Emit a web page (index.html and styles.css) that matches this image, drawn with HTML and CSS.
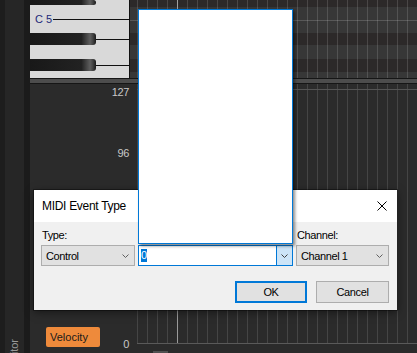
FILE: index.html
```html
<!DOCTYPE html>
<html>
<head>
<meta charset="utf-8">
<link rel="stylesheet" href="styles.css">
</head>
<body>
<div class="app">
  <div class="edge"></div>
  <div class="side"><span class="side-label">Velocity Editor</span></div>
  <div class="gutter"></div>
  <div class="main">
    <div class="roll">
      <div class="piano">
        <div class="key-row top"><div class="black-key"></div></div>
        <div class="key-gap g1"></div>
        <div class="c-row"><span class="c-label">C 5</span><span class="key-line"></span></div>
        <div class="key-gap g2"></div>
        <div class="key-row"><div class="black-key"></div><span class="key-line"></span></div>
        <div class="key-gap g3"></div>
        <div class="key-row"><div class="black-key"></div><span class="key-line"></span></div>
      </div>
      <div class="roll-grid"></div>
    </div>
    <div class="splitter"></div>
    <div class="vel">
      <div class="vel-scale">
        <span class="tick t127">127</span>
        <span class="tick t96">96</span>
        <div class="vel-foot">
          <button class="vel-btn">Velocity</button>
          <span class="tick t0">0</span>
        </div>
      </div>
      <div class="vel-grid">
        <div class="lanes"></div>
        <div class="vel-bottom"><span class="thumb"></span></div>
      </div>
    </div>
  </div>
</div>

<div class="dialog">
  <div class="titlebar">
    <span class="title">MIDI Event Type</span>
    <svg class="close" width="10" height="10" viewBox="0 0 10 10"><path d="M0.5 0.5 L9.5 9.5 M9.5 0.5 L0.5 9.5" stroke="#000" stroke-width="1" fill="none"/></svg>
  </div>
  <div class="dlg-body">
    <div class="fields">
      <div class="field f-type">
        <label>Type:</label>
        <div class="select"><span>Control</span><svg width="7" height="4" viewBox="0 0 7 4"><path d="M0.5 0.5 L3.5 3.5 L6.5 0.5" fill="none" stroke="#606060"/></svg></div>
      </div>
      <div class="field f-value">
        <label></label>
        <div class="combo">
          <span class="combo-text"><span class="sel">0</span></span>
          <span class="combo-btn"><svg width="7" height="4" viewBox="0 0 7 4"><path d="M0.5 0.5 L3.5 3.5 L6.5 0.5" fill="none" stroke="#404040"/></svg></span>
        </div>
      </div>
      <div class="field f-channel">
        <label>Channel:</label>
        <div class="select"><span>Channel 1</span><svg width="7" height="4" viewBox="0 0 7 4"><path d="M0.5 0.5 L3.5 3.5 L6.5 0.5" fill="none" stroke="#606060"/></svg></div>
      </div>
    </div>
    <div class="buttons">
      <button class="btn default">OK</button>
      <button class="btn">Cancel</button>
    </div>
  </div>
</div>

<div class="dropdown"></div>
</body>
</html>
```

FILE: styles.css
```css
* { box-sizing: border-box; }
html, body { margin: 0; padding: 0; }
body {
  width: 417px;
  height: 353px;
  overflow: hidden;
  position: relative;
  background: #2b2b2b;
  font-family: "Liberation Sans", Arial, sans-serif;
}
.app { display: flex; height: 353px; overflow: hidden; }
.edge { width: 5px; background: #1d1d1d; }
.side {
  width: 19px;
  background: #262626;
  display: flex;
  flex-direction: column;
  align-items: center;
  overflow: hidden;
}
.side-label {
  writing-mode: vertical-rl;
  transform: rotate(180deg);
  margin-top: 339px;
  font-size: 11px;
  line-height: 19px;
  color: #9a9a9a;
  white-space: nowrap;
}
.gutter { width: 6px; background: #1b1b1b; }
.main { flex: 1; display: flex; flex-direction: column; min-width: 0; }

/* piano roll */
.roll { height: 78px; display: flex; }
.piano {
  width: 100px;
  background: #d9d9d9;
  border-right: 1px solid #111;
  display: flex;
  flex-direction: column;
}
.key-row { height: 12px; display: flex; align-items: center; }
.key-row.top { height: 5px; }
.black-key {
  width: 66px;
  height: 100%;
  border-radius: 0 3px 3px 0;
  background: linear-gradient(to right, #181818 0, #222 78%, #5e5e5e 91%, #444 95%, #1a1a1a 100%);
}
.key-line { flex: 1; height: 1px; background: #111; }
.g1 { height: 9px; }
.g2 { height: 8px; }
.g3 { height: 14px; }
.c-row { height: 11px; display: flex; align-items: center; padding-left: 5px; }
.c-label { font-size: 11px; line-height: 11px; color: #1d2a7a; margin-right: 1px; }

.roll-grid {
  flex: 1;
  background:
    linear-gradient(to right, transparent 47px, #a0a0a0 47px, #a0a0a0 48px, transparent 48px),
    repeating-linear-gradient(to right, transparent 0, transparent 7px, rgba(255,255,255,.14) 7px, rgba(255,255,255,.14) 8px, transparent 8px, transparent 10px),
    linear-gradient(to bottom, transparent 20px, rgba(255,255,255,.17) 20px, rgba(255,255,255,.17) 21px, transparent 21px),
    linear-gradient(to bottom, #2c2929 0, #2c2929 7px, #373737 7px, #373737 33px, #2c2929 33px, #2c2929 45px, #373737 45px, #373737 59px, #2c2929 59px, #2c2929 72px, #373737 72px);
}
.splitter {
  height: 6px;
  background: #4d4d4d;
  border-top: 1px solid #161616;
  border-bottom: 1px solid #161616;
}

/* velocity lane */
.vel { flex: 1; display: flex; background: #2b2b2b; min-height: 0; }
.vel-scale {
  width: 100px;
  display: flex;
  flex-direction: column;
  align-items: flex-end;
  padding-right: 1px;
}
.tick {
  font-size: 11px;
  line-height: 12px;
  letter-spacing: -0.4px;
  color: #c8c8c8;
}
.t127 { margin-top: 2px; }
.t96 { margin-top: 49px; }
.vel-foot {
  margin-top: auto;
  width: 100%;
  display: flex;
  align-items: flex-end;
  padding: 0 0 6px 16px;
}
.vel-btn {
  width: 54px;
  height: 20px;
  background: #ee8a3b;
  border: 0;
  border-radius: 2px;
  font-family: "Liberation Sans", Arial, sans-serif;
  font-size: 11px;
  color: #1a1a1a;
  text-align: left;
  padding: 0 0 0 4px;
}
.t0 { margin-left: auto; margin-bottom: -3px; }
.vel-grid { flex: 1; display: flex; flex-direction: column; padding-left: 7px; }
.lanes {
  height: 260px;
  border-bottom: 1px solid #5a5a5a;
  background:
    linear-gradient(to bottom, transparent 5px, #555 5px, #555 6px, transparent 6px),
    linear-gradient(to right, transparent 40px, #9a9a9a 40px, #9a9a9a 41px, transparent 41px),
    repeating-linear-gradient(to right, rgba(255,255,255,.12) 0, rgba(255,255,255,.12) 1px, transparent 1px, transparent 10px);
}
.vel-bottom { flex: 1; display: flex; align-items: flex-end; padding-left: 16px; }
.thumb { width: 15px; height: 2px; background: #505050; }

/* dialog */
.dialog {
  position: absolute;
  left: 34px;
  top: 190px;
  width: 363px;
  height: 120px;
  background: #f0f0f0;
  box-shadow: 0 0 0 1px rgba(0,0,0,.35), 0 2px 8px rgba(0,0,0,.5);
  display: flex;
  flex-direction: column;
  font-size: 11px;
  letter-spacing: -0.4px;
  color: #000;
  z-index: 1;
}
.titlebar {
  height: 32px;
  background: #fff;
  display: flex;
  align-items: center;
  justify-content: space-between;
  padding: 0 10px 0 8px;
}
.title { font-size: 12px; letter-spacing: -0.3px; }
.dlg-body { flex: 1; padding: 7px 8px 7px 7px; display: flex; flex-direction: column; }
.fields { display: flex; gap: 3px; }
.field { display: flex; flex-direction: column; gap: 3px; }
.field label { height: 13px; line-height: 13px; padding-left: 1px; }
.f-type { width: 94px; }
.f-value { width: 155px; }
.f-channel { width: 93px; }
.select {
  height: 21px;
  background: #e1e1e1;
  border: 1px solid #adadad;
  display: flex;
  align-items: center;
  justify-content: space-between;
  padding: 0 5px 0 4px;
}
.combo {
  height: 21px;
  background: #fff;
  border: 1px solid #0078d7;
  display: flex;
}
.combo-text { flex: 1; display: flex; align-items: center; padding-left: 2px; }
.sel { background: #0078d7; color: #fff; line-height: 13px; }
.combo-btn {
  width: 16px;
  background: #cce4f7;
  border-left: 1px solid #0078d7;
  display: flex;
  align-items: center;
  justify-content: center;
}
.buttons { margin-top: 15px; display: flex; justify-content: flex-end; gap: 9px; }
.btn {
  height: 22px;
  width: 73px;
  background: #e1e1e1;
  border: 1px solid #adadad;
  font-family: "Liberation Sans", Arial, sans-serif;
  font-size: 11px;
  letter-spacing: -0.4px;
  color: #000;
  padding: 0;
}
.btn.default { width: 72px; border: 2px solid #0078d7; }

.dropdown {
  position: absolute;
  left: 138px;
  top: 9px;
  width: 155px;
  height: 235px;
  background: #fff;
  border: 1px solid #0078d7;
  box-shadow: 2px 2px 3px rgba(0,0,0,.45);
  z-index: 2;
}
```
